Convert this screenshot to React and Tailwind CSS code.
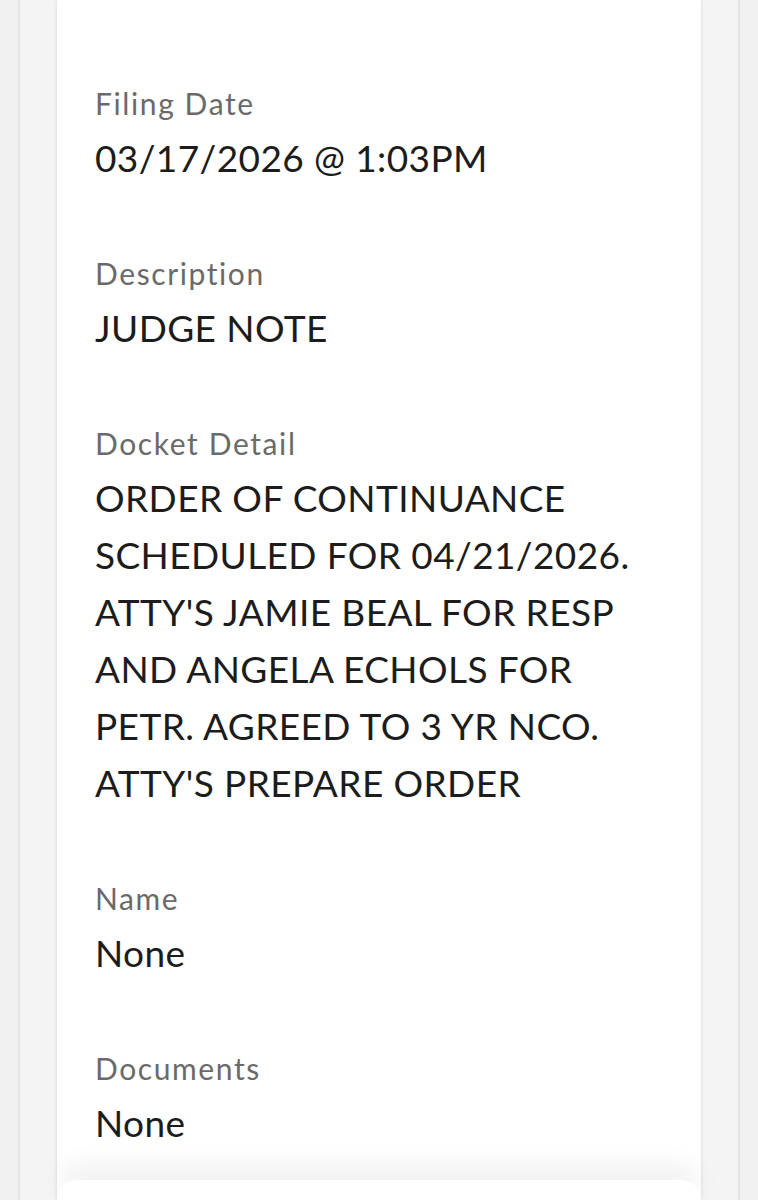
import React from "react";

const fields = [
    { label: "Filing Date", lines: ["03/17/2026 @ 1:03PM"] },
    { label: "Description", lines: ["JUDGE NOTE"] },
    {
        label: "Docket Detail",
        lines: [
            "ORDER OF CONTINUANCE",
            "SCHEDULED FOR 04/21/2026.",
            "ATTY'S JAMIE BEAL FOR RESP",
            "AND ANGELA ECHOLS FOR",
            "PETR. AGREED TO 3 YR NCO.",
            "ATTY'S PREPARE ORDER",
        ],
    },
    { label: "Name", lines: ["None"] },
    { label: "Documents", lines: ["None"] },
];

const Field = ({ label, lines }) => (
    <div className="flex flex-col gap-[6px]">
        <div className="text-[30px] leading-[40px] tracking-[1.6px] text-[#6a6a6a]">{label}</div>
        <div className="text-[37px] leading-[57px] tracking-[0.4px] text-[#1c1c1c]">
            {lines.map((line, idx) => (
                <span key={idx} className="block whitespace-nowrap">{line}</span>
            ))}
        </div>
    </div>
);

export default function App() {
    return (
        <div
            className="w-[758px] h-[1200px] overflow-hidden bg-[#f1f1f1]"
            style={{ fontFamily: "Lato, 'Open Sans', sans-serif" }}
        >
            <div className="mx-[18px] h-full border-x-2 border-[#e4e4e4] bg-gradient-to-r from-[#f4f4f4] via-[#fafafa] to-[#f4f4f4] px-[37px]">
                <div className="h-full bg-white shadow-[0_0_4px_rgba(0,0,0,0.12)] flex flex-col">
                    <div className="pt-[83px] pl-[38px] flex flex-col gap-[67px] flex-1">
                        {fields.map((f) => (
                            <Field key={f.label} label={f.label} lines={f.lines} />
                        ))}
                    </div>
                    {/* next card peeking in at the bottom */}
                    <div className="h-[20px] rounded-t-[48px] bg-white shadow-[0_-12px_26px_rgba(0,0,0,0.08)]" />
                </div>
            </div>
        </div>
    );
}
